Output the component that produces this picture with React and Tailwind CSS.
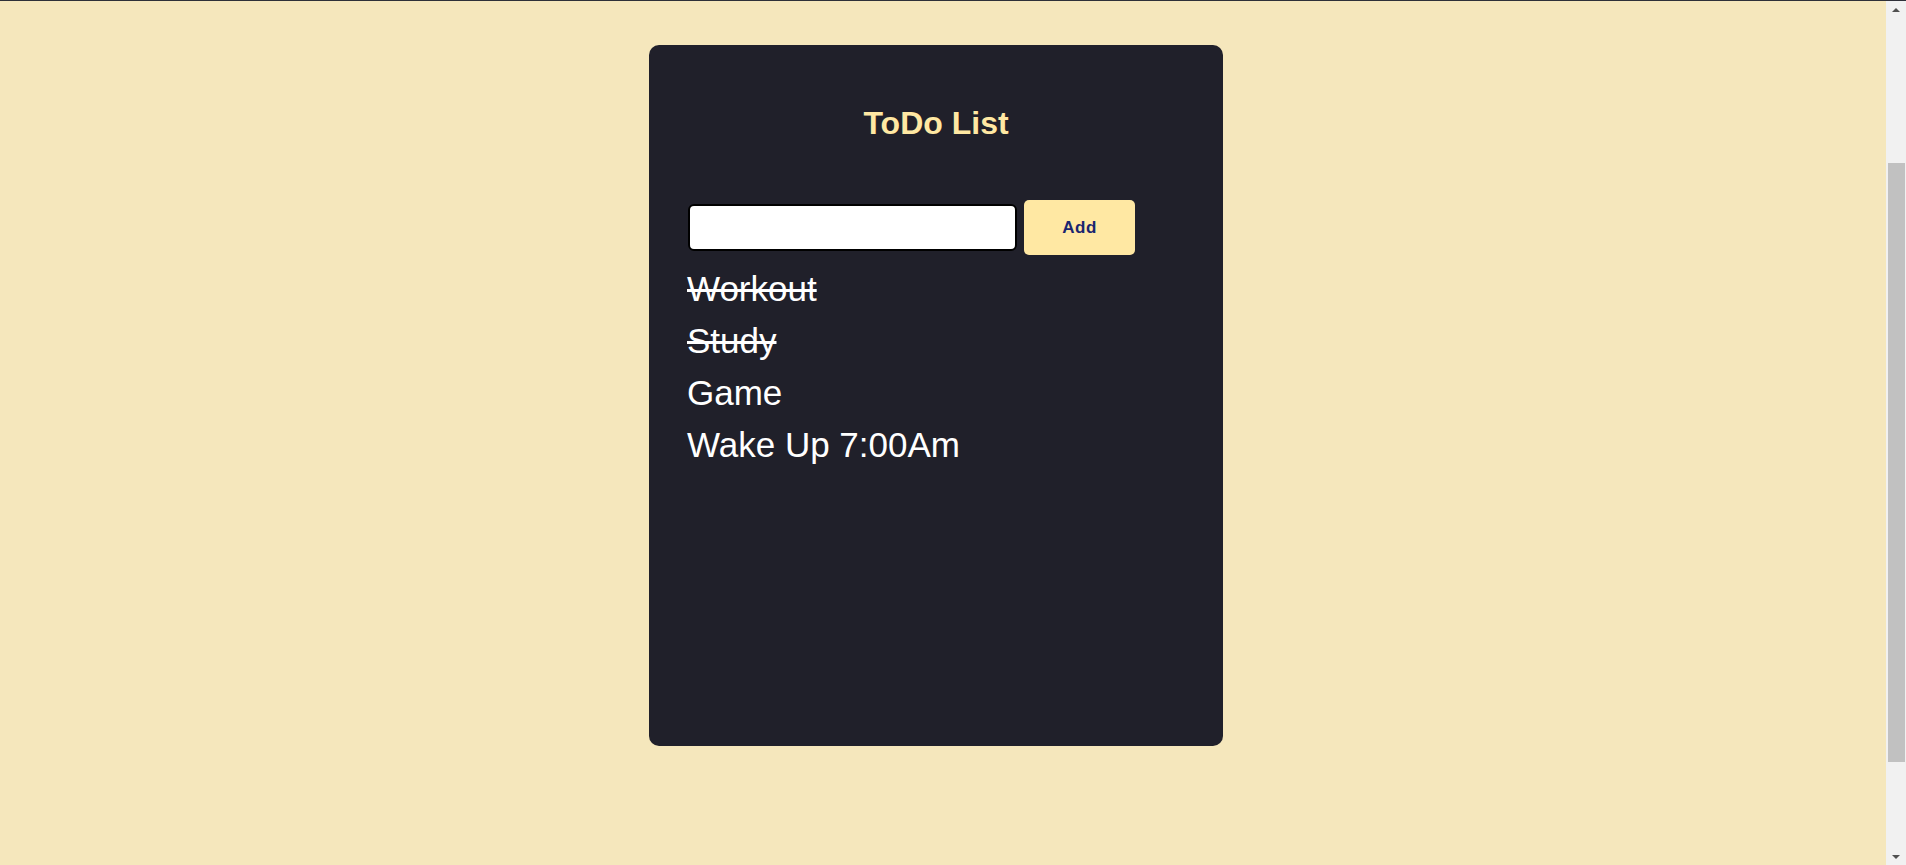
import React, { useState } from 'react';

const initialTodos = [
    { id: 1, text: 'Workout', done: true },
    { id: 2, text: 'Study', done: true },
    { id: 3, text: 'Game', done: false },
    { id: 4, text: 'Wake Up 7:00Am', done: false },
];

const FakeScrollbar = () => (
    <div className="w-[20px] shrink-0 bg-[#f1f1f1] flex flex-col">
        <div className="h-[17px] flex items-center justify-center">
            <div className="w-0 h-0 border-l-[4px] border-r-[4px] border-b-[4px] border-l-transparent border-r-transparent border-b-[#505050]" />
        </div>
        <div className="h-[145px]" />
        <div className="h-[599px] ml-[2px] mr-[1px] bg-[#c1c1c1]" />
        <div className="flex-1" />
        <div className="h-[17px] flex items-center justify-center">
            <div className="w-0 h-0 border-l-[4px] border-r-[4px] border-t-[4px] border-l-transparent border-r-transparent border-t-[#505050]" />
        </div>
    </div>
);

export default function App() {
    const [todos, setTodos] = useState(initialTodos);
    const [value, setValue] = useState('');

    const addTodo = () => {
        if (!value.trim()) return;
        setTodos([...todos, { id: Date.now(), text: value.trim(), done: false }]);
        setValue('');
    };

    const toggle = (id) => {
        setTodos(todos.map((t) => (t.id === id ? { ...t, done: !t.done } : t)));
    };

    return (
        <div className="h-[865px] flex flex-col bg-[#f5e7bc] font-['Liberation_Sans',Arial,sans-serif] overflow-hidden">
            <div className="h-[1px] bg-[#2e3038] shrink-0" />
            <div className="flex-1 flex">
                <main className="flex-1 flex justify-center pt-[44px] pr-[14px]">
                    <div className="w-[574px] h-[701px] rounded-[10px] bg-[#20202a] px-[38px] pt-[60px]">
                        <h1 className="text-[32px] leading-[37px] font-bold text-[#ffe8a3] text-center">
                            ToDo List
                        </h1>

                        <div className="flex items-center mt-[58px] ml-[1px]">
                            <input
                                type="text"
                                value={value}
                                onChange={(e) => setValue(e.target.value)}
                                className="w-[329px] h-[47px] border-2 border-black rounded-[6px] bg-white px-2 text-[18px] text-black outline-none"
                            />
                            <button
                                type="button"
                                onClick={addTodo}
                                className="ml-[7px] w-[111px] h-[55px] rounded-[5px] bg-[#ffe8a3] text-[#1a2570] text-[17px] font-bold tracking-[0.5px]"
                            >
                                Add
                            </button>
                        </div>

                        <ul className="mt-[8px]">
                            {todos.map((t) => (
                                <li
                                    key={t.id}
                                    onClick={() => toggle(t.id)}
                                    className={`text-[35px] leading-[52px] text-white cursor-pointer ${t.done ? 'line-through' : ''}`}
                                >
                                    {t.text}
                                </li>
                            ))}
                        </ul>
                    </div>
                </main>
                <FakeScrollbar />
            </div>
        </div>
    );
}
